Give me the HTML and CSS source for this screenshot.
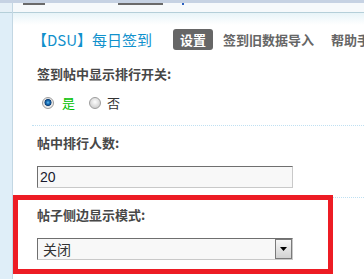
FILE: index.html
```html
<!DOCTYPE html>
<html lang="zh-CN">
<head>
<meta charset="utf-8">
<title>DSU 每日签到 设置</title>
<link rel="stylesheet" href="styles.css">
</head>
<body>
<div class="topbar"></div>
<div class="page">
  <div class="side">
    <div class="side-head"></div>
  </div>
  <div class="main">
    <div class="header">
      <span class="frag frag1"></span>
      <span class="frag frag2"></span>
      <span class="frag frag3"></span>
    </div>
    <div class="content">
      <div class="nav">
        <span class="title">【DSU】每日签到</span>
        <span class="tab active">设置</span>
        <span class="tab">签到旧数据导入</span>
        <span class="tab">帮助手册</span>
      </div>
      <div class="row first">
        <div class="label">签到帖中显示排行开关:</div>
        <div class="radios">
          <span class="radio on"></span><span class="opt yes">是</span>
          <span class="radio second"></span><span class="opt no">否</span>
        </div>
      </div>
      <div class="row">
        <div class="label">帖中排行人数:</div>
        <div class="input field">20</div>
      </div>
      <div class="row hl">
        <div class="label">帖子侧边显示模式:</div>
        <div class="select field">
          <span class="select-text">关闭</span>
          <span class="select-btn"><svg width="7" height="4" viewBox="0 0 7 4"><polygon points="0,0 7,0 3.5,4" fill="#000"/></svg></span>
        </div>
        <div class="annot"></div>
      </div>
    </div>
  </div>
</div>
</body>
</html>
```
FILE: styles.css
```css
* { box-sizing: border-box; }
body {
  margin: 0;
  width: 364px;
  height: 279px;
  overflow: hidden;
  background: #fff;
  font-family: "Noto Sans CJK SC", "Liberation Sans", sans-serif;
}
.topbar { height: 3px; background: #c6d2e3; }
.page { display: flex; height: 276px; }
.side {
  width: 13px;
  background: #dfeef8;
  border-right: 1px solid #c3d7e3;
  display: flex;
  flex-direction: column;
}
.side-head { height: 10px; border-bottom: 1px solid #b5cfd9; background: #e6f0f7; }
.main { flex: 1; display: flex; flex-direction: column; min-width: 0; }
.header {
  height: 10px;
  border-bottom: 1px solid #b5cfd9;
  background: #f6f9fb;
  display: flex;
  align-items: flex-start;
}
.frag { display: block; height: 2px; background: #6a6a6a; }
.frag1 { margin-left: 10px; width: 22px; }
.frag2 { margin-left: 73px; width: 45px; }
.frag3 { margin-left: 19px; width: 2px; background: #2a5fc0; }
.content {
  flex: 1;
  padding-left: 19px;
  background: linear-gradient(#e8f4f8, #fff 12px);
}
.nav {
  display: flex;
  align-items: center;
  height: 21px;
  margin-top: 16px;
  margin-bottom: 7px;
  white-space: nowrap;
}
.title { font-size: 15px; color: #1191cc; margin-left: 0; }
.tab { font-size: 13px; font-weight: bold; color: #666; margin-left: 17px; }
.tab.active {
  margin-left: 21px;
  background: #666;
  color: #fff;
  border-radius: 3px;
  height: 21px;
  line-height: 21px;
  padding: 0 7px;
}
.tab.active + .tab { margin-left: 10px; }
.row {
  border-top: 1px dotted #bfe0f2;
  padding: 7px 0 9px 5px;
}
.row.first { border-top: none; padding-bottom: 12px; }
.label { font-size: 13px; font-weight: bold; line-height: 20px; color: #474747; }
.radios { display: flex; align-items: center; height: 20px; margin-top: 9px; }
.radio {
  width: 12px;
  height: 12px;
  border-radius: 50%;
  border: 1px solid #9c9c9c;
  background: radial-gradient(circle at 50% 40%, #fdfdfd 0, #e6e6e6 3px, #cfcfcf 6px);
  margin-left: 5px;
}
.radio.on {
  background: radial-gradient(circle at 50% 45%, #6cc0f0 0, #1d78c0 1.5px, #0c3f78 3.2px, #dcdcdc 3.8px, #f2f2f2 5px, #cfcfcf 6px);
}
.radio.second { margin-left: 14px; }
.opt { font-size: 13px; line-height: 20px; }
.opt.yes { color: #00c000; margin-left: 8px; }
.opt.no { color: #333; margin-left: 6px; }
.field { margin-top: 13px; }
.input {
  width: 256px;
  height: 22px;
  border: 1px solid;
  border-color: #6f6f6f #c9c9c9 #c9c9c9 #6f6f6f;
  background: #f8f8f8;
  font-family: "Liberation Sans", sans-serif;
  font-size: 14px;
  line-height: 20px;
  padding-left: 2px;
  color: #1a1a2e;
}
.select {
  display: flex;
  align-items: center;
  width: 256px;
  height: 22px;
  border: 1px solid;
  border-color: #6f6f6f #c9c9c9 #c9c9c9 #6f6f6f;
  background: #f8f8f8;
}
.select-text { flex: 1; font-size: 14px; color: #333; padding-left: 5px; line-height: 20px; }
.select-btn {
  width: 17px;
  height: 20px;
  border: 1px solid #7a7a7a;
  background: linear-gradient(#f6f6f6, #d2d2d2);
  display: flex;
  align-items: center;
  justify-content: center;
}
.select-btn svg { display: block; }
.row.hl { position: relative; }
.annot {
  position: absolute;
  left: -19px;
  top: -3px;
  width: 320px;
  height: 79px;
  border: 5px solid #ed1c24;
}
```
